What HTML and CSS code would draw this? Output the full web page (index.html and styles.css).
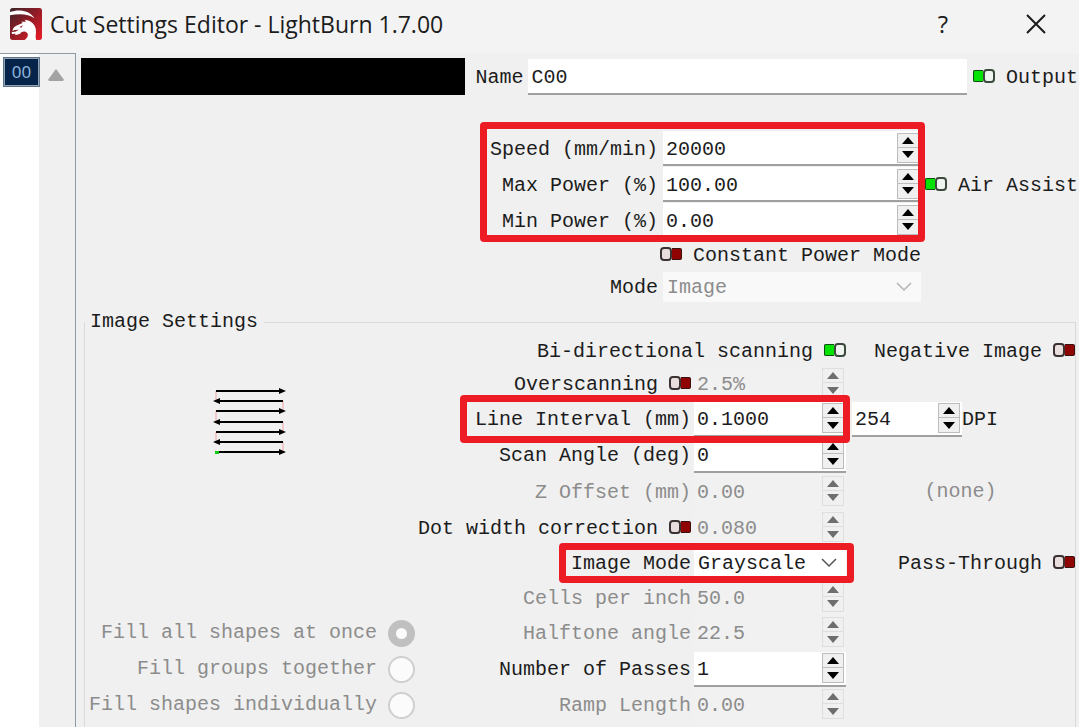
FILE: index.html
```html
<!DOCTYPE html>
<html lang="en">
<head>
  <meta charset="utf-8">
  <title>Cut Settings Editor - LightBurn 1.7.00</title>
  <meta name="viewport" content="width=device-width, initial-scale=1">
  <link rel="stylesheet" href="styles.css">
</head>
<body>
  <header class="titlebar">
    <svg class="logo" viewBox="0 0 96 96" aria-hidden="true">
      <defs>
        <linearGradient id="logoFill" x1="0" y1="0" x2="1" y2="1">
          <stop offset="0" stop-color="#3a2426"/>
          <stop offset="0.45" stop-color="#8c1c26"/>
          <stop offset="1" stop-color="#ee1c28"/>
        </linearGradient>
      </defs>
      <rect width="96" height="96" rx="8" fill="url(#logoFill)"/>
      <path fill="#fff" d="M0 12C22 4 58 4 73 31C58 19 30 15 0 22Z"/>
      <path fill="#fff" d="M22 52L38 45L34 41L48 41L44 35C66 37 79 52 78 72C77 84 76 90 79 96L44 96C55 88 57 77 48 72C41 69 35 71 29 78L14 82L18 77L6 78L5 72L16 71L27 65L14 66L7 69C9 60 14 55 22 52Z"/>
      <path fill="#8c1c26" d="M28 57L39 52L34 59Z"/>
    </svg>
    <h1 class="title">Cut Settings Editor - LightBurn 1.7.00</h1>
    <button class="title-button" type="button">?</button>
    <button class="title-button close" type="button" aria-label="Close">
      <svg width="22" height="22" viewBox="0 0 22 22"><path d="M2 2L20 20M20 2L2 20" stroke="#1a1a1a" stroke-width="2" fill="none"/></svg>
    </button>
  </header>

  <div class="window">
    <aside class="layers">
      <div class="layer-list">
        <button class="layer" type="button">00</button>
      </div>
      <div class="scrollbar">
        <button class="scroll-up" type="button" aria-label="Scroll up"></button>
      </div>
    </aside>

    <main class="editor">
      <div class="name-row">
        <div class="swatch"></div>
        <label for="name">Name</label>
        <input class="name-input" id="name" type="text" value="C00">
        <label class="toggle-label"><input class="toggle" type="checkbox" checked>Output</label>
      </div>

      <!-- Speed and power -->
      <div class="power">
        <div class="power-fields marked marked-power">
          <div class="pair">
            <label for="speed">Speed (mm/min)</label>
            <div class="spin">
              <input id="speed" type="text" value="20000">
              <div class="steps"><button type="button" aria-label="Up"></button><button type="button" aria-label="Down"></button></div>
            </div>
          </div>
          <div class="pair">
            <label for="max-power">Max Power (%)</label>
            <div class="spin">
              <input id="max-power" type="text" value="100.00">
              <div class="steps"><button type="button" aria-label="Up"></button><button type="button" aria-label="Down"></button></div>
            </div>
          </div>
          <div class="pair">
            <label for="min-power">Min Power (%)</label>
            <div class="spin">
              <input id="min-power" type="text" value="0.00">
              <div class="steps"><button type="button" aria-label="Up"></button><button type="button" aria-label="Down"></button></div>
            </div>
          </div>
        </div>
        <label class="toggle-label air"><input class="toggle" type="checkbox" checked>Air Assist</label>
        <label class="toggle-label constant"><input class="toggle" type="checkbox">Constant Power Mode</label>
        <div class="pair mode">
          <label for="mode">Mode</label>
          <div class="combo">
            <select id="mode" disabled><option>Image</option></select>
            <svg class="chevron" viewBox="0 0 16 10"><path d="M1 1L8 8L15 1"/></svg>
          </div>
        </div>
      </div>

      <!-- Image settings -->
      <fieldset class="image-settings">
        <legend>Image Settings</legend>
        <div class="grid">
          <svg class="preview" width="74" height="70" viewBox="2 -2 74 70" aria-hidden="true">
            <path d="M3 4V14M3 24V35M3 45V55M70 14V24M70 35V45M70 55V65" stroke="#f5a3a3"/>
            <path d="M3 4H68M6 14H70M3 24H68M6 35H70M3 45H68M6 55H70M3 65H68" stroke="#000" stroke-width="2"/>
            <path d="M66 1L73 4L66 7ZM66 21L73 24L66 27ZM66 42L73 45L66 48ZM66 62L73 65L66 68ZM7 11L0 14L7 17ZM7 32L0 35L7 38ZM7 52L0 55L7 58Z"/>
            <rect x="2" y="64" width="4" height="3" fill="#12c912"/>
          </svg>
          <label class="fill-option fill-all disabled">Fill all shapes at once<input class="radio" type="radio" name="fill" checked disabled></label>
          <label class="fill-option fill-groups disabled">Fill groups together<input class="radio" type="radio" name="fill" disabled></label>
          <label class="fill-option fill-single disabled">Fill shapes individually<input class="radio" type="radio" name="fill" disabled></label>

          <label class="toggle-label bidirectional">Bi-directional scanning<input class="toggle" type="checkbox" checked></label>
          <div class="pair">
            <label class="toggle-label">Overscanning<input class="toggle" type="checkbox"></label>
            <div class="spin">
              <input type="text" value="2.5%" aria-label="Overscanning" disabled>
              <div class="steps"><button type="button" aria-label="Up" disabled></button><button type="button" aria-label="Down" disabled></button></div>
            </div>
          </div>
          <div class="pair marked marked-interval">
            <label for="interval">Line Interval (mm)</label>
            <div class="spin">
              <input id="interval" type="text" value="0.1000">
              <div class="steps"><button type="button" aria-label="Up"></button><button type="button" aria-label="Down"></button></div>
            </div>
          </div>
          <div class="pair">
            <label for="angle">Scan Angle (deg)</label>
            <div class="spin">
              <input id="angle" type="text" value="0">
              <div class="steps"><button type="button" aria-label="Up"></button><button type="button" aria-label="Down"></button></div>
            </div>
          </div>
          <div class="pair disabled">
            <label for="z-offset">Z Offset (mm)</label>
            <div class="spin">
              <input id="z-offset" type="text" value="0.00" disabled>
              <div class="steps"><button type="button" aria-label="Up" disabled></button><button type="button" aria-label="Down" disabled></button></div>
            </div>
          </div>
          <div class="pair">
            <label class="toggle-label">Dot width correction<input class="toggle" type="checkbox"></label>
            <div class="spin">
              <input type="text" value="0.080" aria-label="Dot width correction" disabled>
              <div class="steps"><button type="button" aria-label="Up" disabled></button><button type="button" aria-label="Down" disabled></button></div>
            </div>
          </div>
          <div class="pair marked marked-mode">
            <label for="image-mode">Image Mode</label>
            <div class="combo">
              <select id="image-mode"><option>Grayscale</option></select>
              <svg class="chevron" viewBox="0 0 16 10"><path d="M1 1L8 8L15 1"/></svg>
            </div>
          </div>
          <div class="pair disabled">
            <label for="cells">Cells per inch</label>
            <div class="spin">
              <input id="cells" type="text" value="50.0" disabled>
              <div class="steps"><button type="button" aria-label="Up" disabled></button><button type="button" aria-label="Down" disabled></button></div>
            </div>
          </div>
          <div class="pair disabled">
            <label for="halftone">Halftone angle</label>
            <div class="spin">
              <input id="halftone" type="text" value="22.5" disabled>
              <div class="steps"><button type="button" aria-label="Up" disabled></button><button type="button" aria-label="Down" disabled></button></div>
            </div>
          </div>
          <div class="pair">
            <label for="passes">Number of Passes</label>
            <div class="spin">
              <input id="passes" type="text" value="1">
              <div class="steps"><button type="button" aria-label="Up"></button><button type="button" aria-label="Down"></button></div>
            </div>
          </div>
          <div class="pair disabled">
            <label for="ramp">Ramp Length</label>
            <div class="spin">
              <input id="ramp" type="text" value="0.00" disabled>
              <div class="steps"><button type="button" aria-label="Up" disabled></button><button type="button" aria-label="Down" disabled></button></div>
            </div>
          </div>

          <label class="toggle-label side negative">Negative Image<input class="toggle" type="checkbox"></label>
          <div class="side dpi">
            <div class="spin">
              <input id="dpi" type="text" value="254">
              <div class="steps"><button type="button" aria-label="Up"></button><button type="button" aria-label="Down"></button></div>
            </div>
            <label for="dpi">DPI</label>
          </div>
          <div class="side none disabled">(none)</div>
          <label class="toggle-label side pass-through">Pass-Through<input class="toggle" type="checkbox"></label>
        </div>
      </fieldset>
    </main>
  </div>
</body>
</html>
```

FILE: styles.css
```css
*,
*::before,
*::after {
  box-sizing: border-box;
}

body {
  margin: 0;
  height: 100vh;
  display: flex;
  flex-direction: column;
  overflow: hidden;
  background: #f0f0f0;
  color: #1c1c1c;
  font-family: "Liberation Mono", monospace;
  font-size: 20px;
  line-height: 24px;
}

input,
select,
button {
  margin: 0;
  padding: 0;
  border: 0;
  border-radius: 0;
  color: inherit;
  font: inherit;
}

label {
  padding-top: 2px;
}

label,
legend {
  white-space: nowrap;
}

.disabled {
  color: #8c8c8c;
}

/* Title bar */
.titlebar {
  display: flex;
  align-items: center;
  flex: none;
  height: 53px;
  padding: 0 20px 6px 10px;
  background: #f3f3f3;
  font-family: "Open Sans", sans-serif;
}

.logo {
  width: 32px;
  height: 32px;
  margin-right: 8px;
}

.title {
  flex: 1;
  margin: 0;
  font-size: 23px;
  font-weight: normal;
  line-height: 32px;
}

.title-button {
  width: 46px;
  height: 32px;
  background: none;
  font-size: 24px;
}

.close {
  display: flex;
  align-items: center;
  justify-content: center;
  margin-left: 47px;
}

.window {
  flex: 1;
  display: flex;
  min-height: 0;
}

/* Layer list */
.layers {
  display: flex;
  flex: none;
  width: 76px;
  border-top: 1px solid #8f9aa4;
  border-right: 1px solid #8f9aa4;
}

.layer-list {
  width: 39px;
  background: #fff;
}

.layer {
  display: block;
  width: 35px;
  height: 28px;
  margin: 4px 0 0 4px;
  border: 1px solid #8fa3b5;
  outline: 1px solid #5f7488;
  background: #06244a;
  color: #8db4da;
  font: 17px/24px "Noto Sans", sans-serif;
}

.scrollbar {
  flex: 1;
  padding: 15px 0 0 9px;
}

.scroll-up {
  display: block;
  width: 16px;
  height: 12px;
  background: #a3a3a3;
  clip-path: polygon(50% 0, 100% 90%, 94% 100%, 6% 100%, 0 90%);
}

.editor {
  flex: 1;
  display: flex;
  flex-direction: column;
  min-width: 0;
  padding: 5px 0 0 5px;
}

/* Layer name */
.name-row {
  display: flex;
  align-items: center;
  padding-right: 1px;
}

.swatch {
  flex: 7 1 6px;
  height: 37px;
  margin-right: 10px;
  background: #000;
}

.name-input {
  flex: 8;
  min-width: 0;
  height: 36px;
  margin: 0 6px 0 5px;
  padding: 4px 3px 0;
  border-bottom: 2px solid #a0a0a0;
  background: #fff;
}

/* Switches */
.toggle-label {
  display: flex;
  align-items: center;
  gap: 11px;
}

.toggle {
  flex: none;
  appearance: none;
  display: flex;
  align-items: center;
  width: 22px;
  height: 14px;
  margin-bottom: 4px;
}

.toggle::before {
  content: "";
  width: 12px;
  height: 14px;
  border: 2px solid #3a3232;
  border-radius: 4px;
  background: #e9dddd;
}

.toggle::after {
  content: "";
  width: 10px;
  height: 12px;
  border: 1px solid #3a1010;
  border-left: 0;
  border-radius: 0 2px 2px 0;
  background: #8f0303;
}

.toggle:checked {
  flex-direction: row-reverse;
}

.toggle:checked::before {
  border-color: #3c4a3c;
  background: #f1f5f1;
}

.toggle:checked::after {
  border: 1px solid #0d4d0d;
  border-right: 0;
  border-radius: 2px 0 0 2px;
  background: #05e305;
}

/* Labelled fields */
.pair {
  display: flex;
  align-items: center;
  justify-content: flex-end;
  gap: 3px;
}

.spin {
  display: flex;
  align-items: center;
  width: 152px;
  height: 35px;
  padding-right: 2px;
  border-bottom: 2px solid #a0a0a0;
  background: #fff;
}

.spin input {
  flex: 1;
  min-width: 0;
  padding: 4px 0 0 3px;
  background: none;
}

.spin:has(input:disabled) {
  border-bottom-color: transparent;
  background: #f1f1f1;
  color: #8c8c8c;
}

.steps {
  display: flex;
  flex-direction: column;
  width: 22px;
}

.steps button {
  display: flex;
  align-items: center;
  justify-content: center;
  height: 15px;
  border: 1px solid #bdbdbd;
  background: #f0f0f0;
  color: #000;
}

.steps button + button {
  border-top: 0;
}

.steps button::before {
  content: "";
  border: 6px solid transparent;
  border-top-width: 0;
  border-bottom: 7px solid;
}

.steps button + button::before {
  border-top: 7px solid;
  border-bottom-width: 0;
}

.steps button:disabled {
  border-color: #dedede;
  color: #6e6e6e;
}

.combo {
  display: grid;
  align-items: center;
  width: 152px;
}

.combo select,
.chevron {
  grid-area: 1 / 1;
}

.combo select {
  appearance: none;
  width: 100%;
  height: 30px;
  padding: 2px 0 0 4px;
  background: #fff;
}

.combo select:disabled {
  background: #f9f9f9;
  color: #8c8c8c;
  opacity: 1;
}

.chevron {
  justify-self: end;
  width: 16px;
  height: 10px;
  margin-right: 9px;
  fill: none;
  stroke: #555;
  stroke-width: 1.5;
  pointer-events: none;
}

select:disabled + .chevron {
  stroke: #b5b5b5;
}

/* Red frames around the settings to change */
.marked {
  position: relative;
}

.marked::after {
  content: "";
  position: absolute;
  border: 7px solid #ed1c24;
  border-radius: 4px;
  pointer-events: none;
}

.marked-power::after {
  inset: -9px -4px -4px -10px;
}

.marked-interval::after {
  inset: -7px -4px -6px -15px;
}

.marked-mode::after {
  inset: -5px -8px -5px -12px;
}

/* Speed and power */
.power {
  display: grid;
  grid-template-columns: 1fr 158px;
  grid-template-rows: 108px 31px 33px;
  align-items: center;
  margin-top: 36px;
}

.power-fields {
  display: flex;
  flex-direction: column;
  gap: 1px;
  justify-self: end;
  align-self: start;
}

.power .pair {
  gap: 5px;
}

.power .spin,
.power .combo {
  width: 258px;
}

.air {
  padding-left: 4px;
}

.constant {
  justify-self: end;
}

.mode {
  grid-column: 1;
}

/* Image settings */
.image-settings {
  flex: 1;
  min-width: 0;
  margin: 7px 3px 0;
  padding: 0;
  border: 1px solid #dadada;
  border-bottom: 0;
}

.image-settings legend {
  padding: 0 6px 0 5px;
}

.grid {
  display: grid;
  grid-template-columns: 1fr 427px 229px;
  grid-template-rows: 33px 34px 36px 36px 37px 36px 34px 35px 36px 36px 36px;
  grid-auto-flow: column;
  align-items: center;
}

.preview {
  grid-area: 2 / 1 / 5 / 2;
  justify-self: center;
  overflow: visible;
}

.fill-option {
  grid-column: 1;
  display: flex;
  align-items: center;
  justify-content: flex-end;
  gap: 11px;
  padding: 0 4px 0 0;
}

.fill-all {
  grid-row: 9;
}

.fill-groups {
  grid-row: 10;
}

.fill-single {
  grid-row: 11;
}

.radio {
  appearance: none;
  width: 27px;
  height: 27px;
  border: 2px solid #cfcfcf;
  border-radius: 50%;
  background: #fbfbfb;
}

.radio:checked {
  border: 8px solid #c0c0c0;
}

.grid .pair {
  grid-column: 2;
  justify-self: end;
}

.bidirectional {
  grid-area: 1 / 2;
  justify-self: end;
}

.side {
  grid-column: 3;
}

.negative,
.pass-through {
  justify-self: end;
}

.negative {
  grid-row: 1;
}

.dpi {
  grid-row: 3;
  display: flex;
  align-items: center;
  padding-left: 6px;
}

.dpi .spin {
  width: 110px;
}

.none {
  grid-row: 5;
  justify-self: center;
}

.pass-through {
  grid-row: 7;
}
```
